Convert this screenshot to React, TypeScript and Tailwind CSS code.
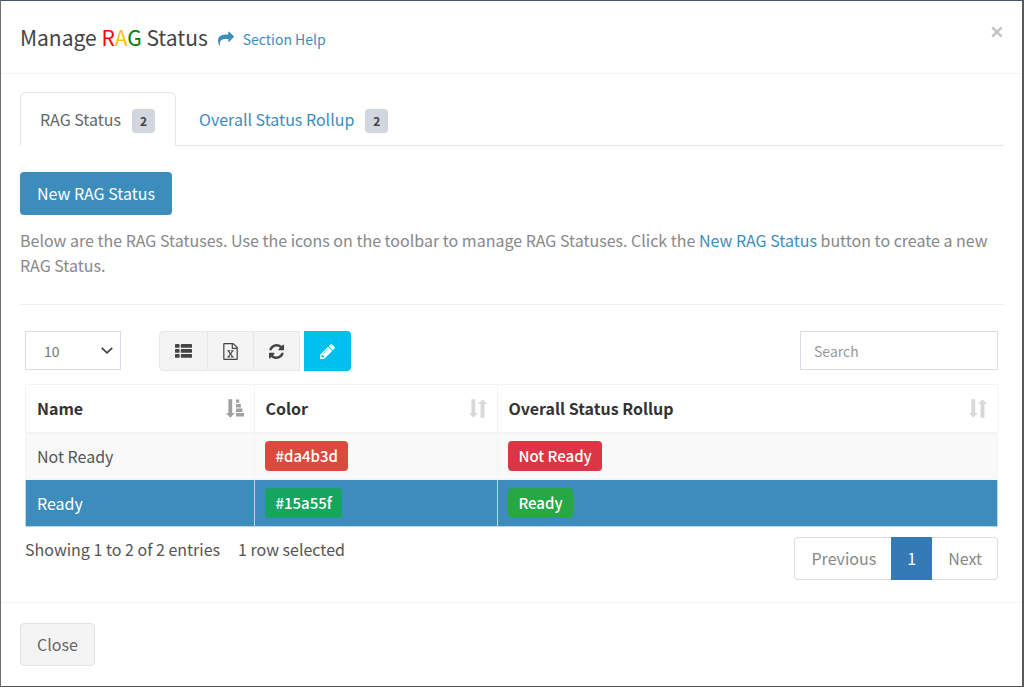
import { useState } from 'react';
import type { ReactNode } from 'react';
import clsx from 'clsx';

const tabs = [
  { name: 'RAG Status', count: 2 },
  { name: 'Overall Status Rollup', count: 2 },
];

const rows = [
  { name: 'Not Ready', color: '#da4b3d', colorClass: 'bg-[#da4b3d]', rollupClass: 'bg-[#dc3545]' },
  { name: 'Ready', color: '#15a55f', colorClass: 'bg-[#15a55f]', rollupClass: 'bg-[#28a745]' },
];

function ShareIcon() {
  return (
    <svg viewBox="0 0 1792 1792" className="h-4 w-4 fill-[#3c8dbc]" aria-hidden="true">
      <path d="M1792 640q0 26-19 45l-512 512q-19 19-45 19t-45-19-19-45v-256h-224q-98 0-175.5 6t-154 21.5-133 42.5-105.5 69.5-80 101-48.5 138.5-17.5 181q0 55 5 123 0 6 2.5 23.5t2.5 26.5q0 15-8.5 25t-23.5 10q-16 0-28-17-7-9-13-22t-13.5-30-10.5-24q-127-285-127-451 0-199 53-333 162-403 875-403h224v-256q0-26 19-45t45-19 45 19l512 512q19 19 19 45z" />
    </svg>
  );
}

function ListIcon() {
  return (
    <svg viewBox="0 0 17 14" className="h-[14px] w-[17px] fill-current" aria-hidden="true">
      {[0, 5, 10].map((y) => (
        <g key={y}>
          <rect x="0" y={y} width="4.6" height="3.8" rx="0.9" />
          <rect x="5.8" y={y} width="11.2" height="3.8" rx="0.9" />
        </g>
      ))}
    </svg>
  );
}

function ExcelIcon() {
  return (
    <svg viewBox="0 0 1792 1792" className="h-[17px] w-[17px] fill-current" aria-hidden="true">
      <path d="M1596 380q28 28 48 76t20 88v1152q0 40-28 68t-68 28h-1344q-40 0-68-28t-28-68v-1600q0-40 28-68t68-28h896q40 0 88 20t76 48zm-444-244v376h376q-10-29-22-41l-313-313q-12-12-41-22zm384 1528v-1024h-416q-40 0-68-28t-28-68v-416h-768v1536h1280zm-979-234v106h281v-106h-75l103-161q5-7 10-16.5t7.5-13.5 3.5-4h2q1 4 5 10 2 4 4.5 7.5t6 8 6.5 8.5l107 161h-76v106h291v-106h-68l-192-273 195-282h67v-107h-279v107h74l-103 159q-4 7-10 16.5t-9 13.5l-2 3h-2q-1-4-5-10-6-11-17-23l-106-159h76v-107h-290v107h68l189 272-194 283h-68z" />
    </svg>
  );
}

function RefreshIcon() {
  return (
    <svg viewBox="0 0 1536 1536" className="h-[15px] w-[15px] fill-current" aria-hidden="true">
      <path d="M1511 928q0 5-1 7-64 268-268 434.5t-478 166.5q-146 0-282.5-55t-243.5-157l-129 129q-19 19-45 19t-45-19-19-45v-448q0-26 19-45t45-19h448q26 0 45 19t19 45-19 45l-137 137q71 66 161 102t187 36q134 0 250-65t186-179q11-17 53-117 8-23 30-23h192q13 0 22.5 9.5t9.5 22.5zm25-800v448q0 26-19 45t-45 19h-448q-26 0-45-19t-19-45 19-45l138-138q-148-137-349-137-134 0-250 65t-186 179q-11 17-53 117-8 23-30 23h-199q-13 0-22.5-9.5t-9.5-22.5v-7q65-268 270-434.5t480-166.5q146 0 284 55.5t245 156.5l130-129q19-19 45-19t45 19 19 45z" />
    </svg>
  );
}

function PencilIcon() {
  return (
    <svg viewBox="128 128 1536 1536" className="h-[15px] w-[15px] fill-current" aria-hidden="true">
      <path d="M491 1536l91-91-235-235-91 91v107h128v128h107zm523-928q0-22-22-22-10 0-17 7l-542 542q-7 7-7 17 0 22 22 22 10 0 17-7l542-542q7-7 7-17zm-54-192l416 416-832 832h-416v-416zm683 96q0 53-37 90l-166 166-416-416 166-165q36-38 90-38 53 0 91 38l235 234q37 39 37 91z" />
    </svg>
  );
}

function SortIcon({ sorted }: { sorted?: boolean }) {
  return (
    <svg
      viewBox="0 0 18 19"
      className={clsx('h-[19px] w-[18px] shrink-0', sorted ? 'fill-[#a0a0a0]' : 'fill-[#d8d8d8]')}
      aria-hidden="true"
    >
      <path d="M2.4 0.3h3.8v13.8h2.6L4.3 18.8 0 14.1h2.4z" />
      {sorted ? (
        <path d="M10 0.6h3.2v3.2H10zM10 5h4.8v3.4H10zM10 9.5h6.4v3.4H10zM10 14h8v3.5h-8z" />
      ) : (
        <path d="M11.6 18.7V5H9l4.5-4.7L18 5h-2.6v13.7z" />
      )}
    </svg>
  );
}

function ToolButton({ label, className, children }: { label: string; className: string; children: ReactNode }) {
  return (
    <button type="button" aria-label={label} className={clsx('flex h-10 items-center justify-center', className)}>
      {children}
    </button>
  );
}

function Label({ className, children }: { className: string; children: ReactNode }) {
  return (
    <span className={clsx('inline-block rounded px-[10px] text-[15px] leading-[30px] font-medium text-white', className)}>
      {children}
    </span>
  );
}

export default function App() {
  const [activeTab, setActiveTab] = useState('RAG Status');
  const [selected, setSelected] = useState('Ready');

  return (
    <div className="min-h-screen border-t border-r-2 border-b-2 border-l border-t-[#405869] border-r-[#58595b] border-b-[#505152] border-l-[#6b7075] bg-white font-['Noto_Sans_CJK_SC',sans-serif] text-base leading-[25px] text-[#555]">
      <header className="flex items-start justify-between border-b border-[#f4f4f4] px-[19px] pt-[21px] pb-[21px]">
        <div className="flex items-center gap-[10px]">
          <h1 className="text-[21px] leading-[30px] text-[#444]">
            Manage <span className="text-[#ff0000]">R</span>
            <span className="text-[#ffc107]">A</span>
            <span className="text-[#008000]">G</span> Status
          </h1>
          <a href="#" className="flex items-center gap-[9px] pt-1 text-sm text-[#3c8dbc]">
            <ShareIcon />
            Section Help
          </a>
        </div>
        <button type="button" aria-label="Close dialog" className="flex h-5 w-3 items-center justify-center">
          <svg viewBox="0 0 12 12" className="h-3 w-3 stroke-[#c4c4c4]" strokeWidth="2.6" aria-hidden="true">
            <path d="M1.3 1.3l9.4 9.4M10.7 1.3l-9.4 9.4" />
          </svg>
        </button>
      </header>

      <main className="border-b border-[#f4f4f4] pt-[18px] pr-[18px] pb-[22px] pl-[19px]">
        <nav className="flex border-b border-[#e4e6e9]">
          {tabs.map((tab) => (
            <button
              key={tab.name}
              type="button"
              onClick={() => setActiveTab(tab.name)}
              className={clsx(
                '-mb-px flex h-[54px] items-center gap-[11px] rounded-t-md border border-b-0 pr-5',
                activeTab === tab.name
                  ? 'border-[#e4e6e9] bg-white pl-[19px] text-[#666]'
                  : 'border-transparent pl-[22px] text-[#3c8dbc]',
              )}
            >
              {tab.name}
              <span className="mt-[3px] rounded bg-[#d2d6de] px-2 text-xs leading-6 font-bold text-[#444]">
                {tab.count}
              </span>
            </button>
          ))}
        </nav>

        <button type="button" className="mt-[26px] h-[43px] rounded bg-[#3c8dbc] px-[17px] text-white">
          New RAG Status
        </button>
        <p className="mt-[13px] text-[#888]">
          Below are the RAG Statuses. Use the icons on the toolbar to manage RAG Statuses. Click the{' '}
          <a href="#" className="text-[#3c8dbc]">New RAG Status</a> button to create a new RAG Status.
        </p>
        <hr className="mt-[26px] border-[#eee]" />

        <div className="pt-[26px] pr-[6px] pl-[5px]">
          <div className="flex items-start justify-between">
            <div className="flex">
              <div className="relative mr-[38px]">
                <select aria-label="Entries per page" className="h-[39px] w-24 appearance-none border border-[#dcdce8] bg-white pl-[18px] text-sm text-[#777]">
                  <option>10</option>
                  <option>25</option>
                  <option>50</option>
                </select>
                <svg viewBox="0 0 12 7" className="pointer-events-none absolute top-4 right-2 h-[7px] w-3 fill-none stroke-[#444]" strokeWidth="1.8" aria-hidden="true">
                  <path d="M0.8 0.8L6 5.8l5.2-5" />
                </svg>
              </div>
              <div className="flex text-[#444]">
                <ToolButton label="Columns" className="w-[49px] rounded-l border border-[#e7e7e7] bg-[#f4f4f4]">
                  <ListIcon />
                </ToolButton>
                <ToolButton label="Export to Excel" className="w-[45px] border-y border-[#e7e7e7] bg-[#f4f4f4]">
                  <ExcelIcon />
                </ToolButton>
                <ToolButton label="Refresh" className="w-[47px] border border-[#e7e7e7] bg-[#f4f4f4]">
                  <RefreshIcon />
                </ToolButton>
                <ToolButton label="Edit" className="ml-1 w-[47px] rounded-r bg-[#00c0ef] text-white">
                  <PencilIcon />
                </ToolButton>
              </div>
            </div>
            <input
              type="search"
              aria-label="Search"
              placeholder="Search"
              className="h-[39px] w-[198px] border border-[#dcdce8] px-[13px] text-sm text-[#555] placeholder:text-[#999]"
            />
          </div>

          <table className="mt-[13px] w-full table-fixed border-collapse border border-[#f4f4f4] text-left">
            <thead>
              <tr className="h-12 border-b-2 border-[#f4f4f4] text-[#333]">
                <th className="w-[23.6%] border-r border-[#f4f4f4] pr-[10px] pl-[11px]">
                  <div className="flex items-center justify-between">
                    Name
                    <SortIcon sorted />
                  </div>
                </th>
                <th className="w-1/4 border-r border-[#f4f4f4] px-[10px]">
                  <div className="flex items-center justify-between">
                    Color
                    <SortIcon />
                  </div>
                </th>
                <th className="px-[10px]">
                  <div className="flex items-center justify-between">
                    Overall Status Rollup
                    <SortIcon />
                  </div>
                </th>
              </tr>
            </thead>
            <tbody>
              {rows.map((row) => {
                const active = selected === row.name;
                const line = active ? 'border-[#b9d7e8]' : 'border-[#f4f4f4]';
                return (
                  <tr
                    key={row.name}
                    onClick={() => setSelected(row.name)}
                    className={clsx('h-[47px]', active ? 'bg-[#3c8dbc] text-white' : 'bg-[#f9f9f9]')}
                  >
                    <td className={clsx('border pr-[10px] pl-[11px]', line)}>{row.name}</td>
                    <td className={clsx('border px-[10px]', line)}>
                      <Label className={row.colorClass}>{row.color}</Label>
                    </td>
                    <td className={clsx('border px-[10px]', line)}>
                      <Label className={row.rollupClass}>{row.name}</Label>
                    </td>
                  </tr>
                );
              })}
            </tbody>
          </table>

          <div className="flex items-start justify-between pt-[10px]">
            <div className="flex gap-[18px]">
              <span>Showing 1 to 2 of 2 entries</span>
              <span>1 row selected</span>
            </div>
            <div className="flex h-[43px] text-[#888]">
              <button type="button" className="rounded-l border border-r-0 border-[#ddd] pr-[15px] pl-4">Previous</button>
              <button type="button" className="bg-[#337ab7] px-4 text-white">1</button>
              <button type="button" className="rounded-r border border-l-0 border-[#ddd] pr-[15px] pl-4">Next</button>
            </div>
          </div>
        </div>
      </main>

      <footer className="px-[19px] py-5">
        <button type="button" className="h-[43px] rounded border border-[#e2e2e2] bg-[#f4f4f4] px-4 text-[#666]">
          Close
        </button>
      </footer>
    </div>
  );
}
